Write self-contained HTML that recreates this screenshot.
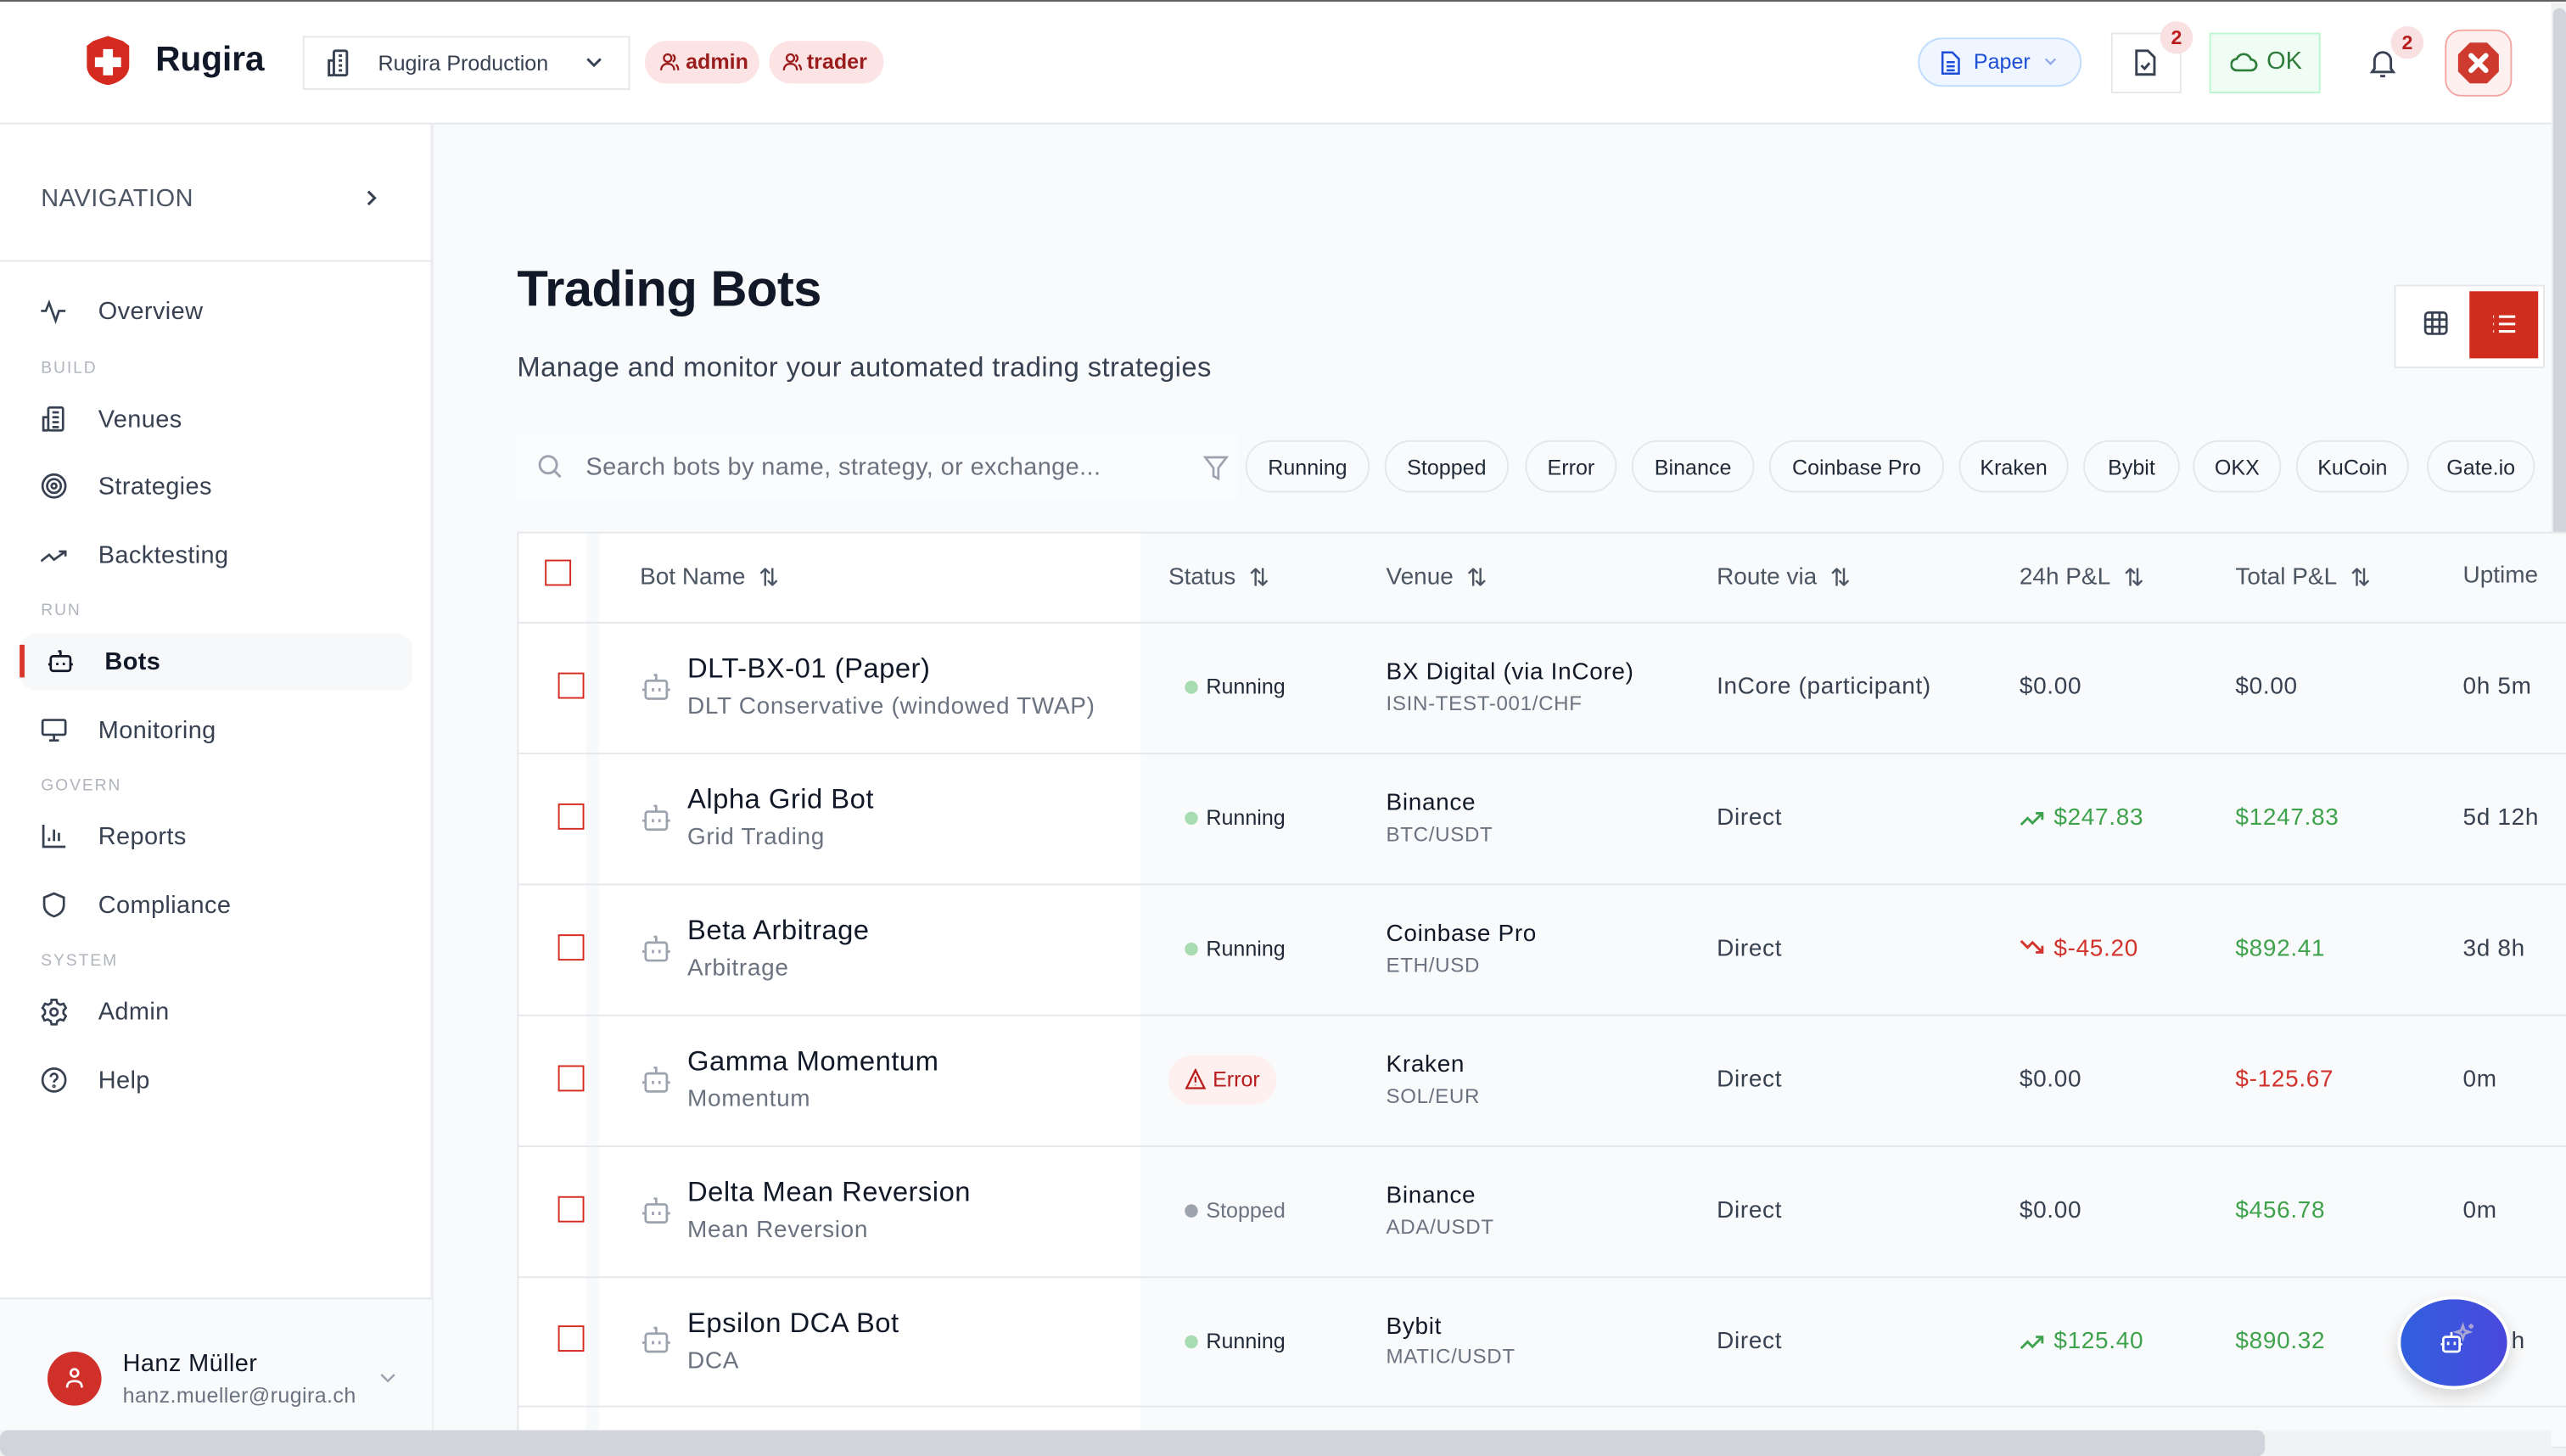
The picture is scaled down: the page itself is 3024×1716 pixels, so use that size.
<!DOCTYPE html>
<html><head><meta charset="utf-8"><style>
*{box-sizing:border-box;margin:0;padding:0}
html,body{width:3024px;height:1716px;overflow:hidden;background:#f9fafb}
#w{position:absolute;left:0;top:0;width:1568px;height:889.5px;transform:scale(1.928571);transform-origin:0 0;font-family:"Liberation Sans",sans-serif;color:#111827;background:#f9fafb;overflow:hidden}
.a{position:absolute}
svg{display:block}
.hdr{left:0;top:0;width:1568px;height:76px;background:#fff;border-top:1px solid #5f5f5f;border-bottom:1px solid #e5e7eb}
.side{left:0;top:76px;width:265px;height:814px;background:#fff;border-right:2px solid #eceef1}
.nav{left:25px;font-size:15px;color:#374151;font-weight:500;display:flex;align-items:center;letter-spacing:.2px}
.nav svg{margin-right:19px}
.sec{left:25px;font-size:10px;color:#b0b5bd;letter-spacing:1px}
.chip{top:269px;height:32px;border:1px solid #e5e7eb;border-radius:16px;font-size:13px;font-weight:500;color:#1f2937;display:flex;align-items:center;justify-content:center}
.th{top:344px;font-size:14.5px;color:#4b5563;display:flex;align-items:center}
.cb{width:16px;height:16px;border:1.5px solid #d42a1f}
.row{left:316px;width:1260px;height:80px;border-top:1px solid #e5e7eb}
.nm{font-size:17px;color:#111827;font-weight:500;letter-spacing:.25px}
.sub{font-size:14.5px;color:#6b7280;letter-spacing:.35px}
.c{font-size:14.5px;color:#374151;letter-spacing:.35px}
.g{color:#3fa34d}.r{color:#d0342c}
.st{font-size:13px;color:#1f2937;display:flex;align-items:center}
.dot{width:8px;height:8px;border-radius:50%;background:#a8dcb0;margin-right:5px}
</style></head><body><div id="w">
<div class="a hdr"></div>
<svg class="a" style="left:53px;top:22px" width="26" height="30" viewBox="0 0 26 30"><path d="M4 3 L13 0 L22 3 L26 6 V18 C26 25 19 29 13 30 C7 29 0 25 0 18 V6 Z" fill="#d42a1f"/><path d="M10 8h6v5h5v6h-5v5h-6v-5H5v-6h5z" fill="#fff"/></svg>
<div class="a" style="left:95px;top:25px;font-size:21px;font-weight:600;color:#111827">Rugira</div>
<div class="a" style="left:185px;top:22px;width:200px;height:33px;border:1.5px solid #e5e7eb;background:#fff"></div>
<svg class="a" style="left:199px;top:30px" width="16" height="17" viewBox="0 0 16 17" fill="none" stroke="#374151" stroke-width="1.5"><rect x="5" y="1" width="8" height="15" rx="1"/><path d="M5 7H2v9h3M8 4h2M8 7h2M8 10h2M8 13h2"/></svg>
<div class="a" style="left:231px;top:31px;font-size:13px;color:#374151">Rugira Production</div>
<svg class="a" style="left:357px;top:33px" width="12" height="10" viewBox="0 0 12 10"><path d="M2 3l4 4 4-4" fill="none" stroke="#374151" stroke-width="1.5"/></svg>
<div class="a" style="left:394px;top:25px;width:70px;height:26px;border-radius:13px;background:#fbe4e3;color:#9b1c1c;font-size:13px;font-weight:600;padding-left:25px;line-height:26px">admin</div>
<div class="a" style="left:470px;top:25px;width:70px;height:26px;border-radius:13px;background:#fbe4e3;color:#9b1c1c;font-size:13px;font-weight:600;padding-left:23px;line-height:26px">trader</div>
<svg class="a" style="left:403px;top:32px" width="12" height="12" viewBox="0 0 12 12" fill="none" stroke="#9b1c1c" stroke-width="1.2"><circle cx="5" cy="3.5" r="2.3"/><path d="M1 11c0-2.5 1.5-4 4-4s4 1.5 4 4M8 1.5a2.3 2.3 0 010 4.2M10 7.5c1 .7 1.5 2 1.5 3.5"/></svg>
<svg class="a" style="left:478px;top:32px" width="12" height="12" viewBox="0 0 12 12" fill="none" stroke="#9b1c1c" stroke-width="1.2"><circle cx="5" cy="3.5" r="2.3"/><path d="M1 11c0-2.5 1.5-4 4-4s4 1.5 4 4M8 1.5a2.3 2.3 0 010 4.2M10 7.5c1 .7 1.5 2 1.5 3.5"/></svg>
<div class="a" style="left:1172px;top:23px;width:100px;height:30px;border-radius:15px;background:#eff6ff;border:1.5px solid #bfdbfe;color:#1d4ed8;font-size:13px;font-weight:500;line-height:27px;padding-left:33px">Paper</div>
<svg class="a" style="left:1186px;top:31px" width="12" height="15" viewBox="0 0 12 15" fill="none" stroke="#1d4ed8" stroke-width="1.3"><path d="M1 1h6l4 4v9H1z"/><path d="M3.5 7h5M3.5 9.5h5M3.5 12h5"/></svg>
<svg class="a" style="left:1248px;top:34px" width="10" height="8" viewBox="0 0 10 8"><path d="M2 2l3 3 3-3" fill="none" stroke="#93a8e8" stroke-width="1.2"/></svg>
<div class="a" style="left:1290px;top:20px;width:43px;height:37px;border:1.5px solid #e5e7eb;background:#fff"></div>
<svg class="a" style="left:1304px;top:30px" width="14" height="17" viewBox="0 0 14 17" fill="none" stroke="#374151" stroke-width="1.5"><path d="M1.5 1h7l4 4v10.5h-11z"/><path d="M4.5 10l2 2 3-3.5"/></svg>
<div class="a" style="left:1320px;top:13px;width:20px;height:20px;border-radius:50%;background:#f9e1e1;color:#b91c1c;font-size:12px;font-weight:700;text-align:center;line-height:20px">2</div>
<div class="a" style="left:1350px;top:20px;width:68px;height:37px;border:1.5px solid #bbf7d0;background:#f0fdf4;color:#2f7d3b;font-size:15px;line-height:34px;padding-left:34px">OK</div>
<svg class="a" style="left:1363px;top:31px" width="17" height="14" viewBox="0 0 17 14"><path d="M4 12h8.5a3.3 3.3 0 000-6.6A4.6 4.6 0 003.8 5 3.5 3.5 0 004 12z" fill="none" stroke="#2f7d3b" stroke-width="1.4"/></svg>
<svg class="a" style="left:1448px;top:29px" width="16" height="19" viewBox="0 0 16 19" fill="none" stroke="#374151" stroke-width="1.5"><path d="M3 13V8a5 5 0 0110 0v5l1.5 2h-13z"/><path d="M6.5 17.5h3"/></svg>
<div class="a" style="left:1461px;top:16px;width:20px;height:20px;border-radius:50%;background:#f9e1e1;color:#b91c1c;font-size:12px;font-weight:700;text-align:center;line-height:20px">2</div>
<div class="a" style="left:1494px;top:18px;width:41px;height:41px;border-radius:10px;border:1.5px solid #f2a7a3;background:#fdf0ef"></div>
<svg class="a" style="left:1502px;top:26px" width="25" height="25" viewBox="0 0 25 25"><path d="M7.3 0h10.4L25 7.3v10.4L17.7 25H7.3L0 17.7V7.3z" fill="#cf3a2f"/><path d="M8 8l9 9M17 8l-9 9" stroke="#fff" stroke-width="3.2" stroke-linecap="round"/></svg>
<div class="a" style="left:1559px;top:1px;width:9px;height:889px;background:#f1f2f4"></div>
<div class="a" style="left:1560px;top:5px;width:8px;height:560px;border-radius:4px;background:#d1d5db"></div>
<div class="a side"></div>
<div class="a" style="left:25px;top:113px;font-size:15px;color:#4b5563;letter-spacing:.3px">NAVIGATION</div>
<svg class="a" style="left:221px;top:114px" width="12" height="14" viewBox="0 0 12 14"><path d="M4 3l4 4-4 4" fill="none" stroke="#374151" stroke-width="1.6"/></svg>
<div class="a" style="left:0;top:159px;width:264px;height:1px;background:#e5e7eb"></div>
<div class="a nav" style="top:181px"><svg width="16" height="18" viewBox="0 0 16 18" fill="none" stroke="#374151" stroke-width="1.4"><path d="M0 9h3l2-5 4 11 2-6h4"/></svg>Overview</div>
<div class="a sec" style="top:220px">BUILD</div>
<div class="a nav" style="top:247px"><svg width="16" height="18" viewBox="0 0 16 18" fill="none" stroke="#374151" stroke-width="1.4"><rect x="4.5" y="2" width="9" height="14" rx="1"/><path d="M4.5 8H1.5v8h3M7 5h4M7 8h4M7 11h4M7 14h4"/></svg>Venues</div>
<div class="a nav" style="top:288px"><svg width="16" height="18" viewBox="0 0 16 18" fill="none" stroke="#374151" stroke-width="1.4"><circle cx="8" cy="9" r="7"/><circle cx="8" cy="9" r="4.2"/><circle cx="8" cy="9" r="1.5"/></svg>Strategies</div>
<div class="a nav" style="top:330px"><svg width="16" height="18" viewBox="0 0 16 18" fill="none" stroke="#374151" stroke-width="1.4"><path d="M0 13l5-4 3 3 7-5M11 7h4v3"/></svg>Backtesting</div>
<div class="a sec" style="top:368px">RUN</div>
<div class="a" style="left:12px;top:387px;width:240px;height:35px;border-radius:10px;background:#f7f8fa"></div>
<div class="a" style="left:12px;top:394px;width:2.5px;height:20px;background:#d9372b"></div>
<div class="a nav" style="left:29px;top:395px;color:#111827;font-weight:600"><svg width="16" height="18" viewBox="0 0 16 18" fill="none" stroke="#111827" stroke-width="1.4"><rect x="2" y="6" width="12" height="9" rx="1.5"/><path d="M8 6V3M6.5 3h2M0.5 11h1.5M14 11h1.5M6 10v1.5M10 10v1.5"/></svg>Bots</div>
<div class="a nav" style="top:437px"><svg width="16" height="18" viewBox="0 0 16 18" fill="none" stroke="#374151" stroke-width="1.4"><rect x="1" y="3" width="14" height="9" rx="1"/><path d="M8 12v3M5 15.5h6"/></svg>Monitoring</div>
<div class="a sec" style="top:475px">GOVERN</div>
<div class="a nav" style="top:502px"><svg width="16" height="18" viewBox="0 0 16 18" fill="none" stroke="#374151" stroke-width="1.4"><path d="M1.5 2v13.5H15M5 12v-2M8 12V5M11 12V7"/></svg>Reports</div>
<div class="a nav" style="top:544px"><svg width="16" height="18" viewBox="0 0 16 18" fill="none" stroke="#374151" stroke-width="1.4"><path d="M8 2l6 2.5V9c0 4-3 6-6 7-3-1-6-3-6-7V4.5z"/></svg>Compliance</div>
<div class="a sec" style="top:582px">SYSTEM</div>
<div class="a nav" style="top:609px"><svg width="16" height="18" viewBox="0 0 16 18" fill="none" stroke="#374151" stroke-width="1.4"><path d="M6.5 2h3l.5 2 1.8 1 2-.6 1.5 2.6-1.5 1.5v2l1.5 1.5-1.5 2.6-2-.6-1.8 1-.5 2h-3l-.5-2-1.8-1-2 .6L1 12l1.5-1.5v-2L1 7l1.5-2.6 2 .6 1.8-1z"/><circle cx="8" cy="9.5" r="2.2"/></svg>Admin</div>
<div class="a nav" style="top:651px"><svg width="16" height="18" viewBox="0 0 16 18" fill="none" stroke="#374151" stroke-width="1.4"><circle cx="8" cy="9" r="7"/><path d="M6 7.2a2 2 0 113 1.7c-.7.4-1 .8-1 1.6"/><circle cx="8" cy="12.8" r=".4"/></svg>Help</div>
<div class="a" style="left:0;top:793px;width:264px;height:1.5px;background:#e5e7eb"></div>
<div class="a" style="left:0;top:794px;width:264px;height:80px;background:#f9fafb"></div>
<div class="a" style="left:29px;top:826px;width:33px;height:33px;border-radius:50%;background:#d0302a"></div>
<svg class="a" style="left:38px;top:834px" width="15" height="17" viewBox="0 0 15 17" fill="none" stroke="#fff" stroke-width="1.4"><circle cx="7.5" cy="5" r="2.3"/><path d="M3 14c0-2.5 1-4 4.5-4s4.5 1.5 4.5 4"/></svg>
<div class="a" style="left:75px;top:825px;font-size:15px;color:#111827;font-weight:500;letter-spacing:.2px">Hanz Müller</div>
<div class="a" style="left:75px;top:845px;font-size:13px;color:#6b7280;letter-spacing:.2px">hanz.mueller@rugira.ch</div>
<svg class="a" style="left:231px;top:837px" width="12" height="10" viewBox="0 0 12 10"><path d="M2 3l4 4 4-4" fill="none" stroke="#9ca3af" stroke-width="1.3"/></svg>
<div class="a" style="left:316px;top:159px;font-size:31px;font-weight:700;color:#111827;letter-spacing:-.3px">Trading Bots</div>
<div class="a" style="left:316px;top:215px;font-size:17px;color:#374151;letter-spacing:.2px">Manage and monitor your automated trading strategies</div>
<div class="a" style="left:1463px;top:174px;width:92px;height:51px;border:1.5px solid #e5e7eb;background:#fff"></div>
<svg class="a" style="left:1481px;top:190px" width="15" height="15" viewBox="0 0 15 15" fill="none" stroke="#374151" stroke-width="1.4"><rect x="1" y="1" width="13" height="13" rx="2"/><path d="M5.3 1v13M9.7 1v13M1 5.3h13M1 9.7h13"/></svg>
<div class="a" style="left:1509px;top:178px;width:42px;height:41px;background:#d02d1f"></div>
<svg class="a" style="left:1522px;top:191px" width="16" height="14" viewBox="0 0 16 14" stroke="#fff" stroke-width="1.6"><path d="M5 2.5h10M5 7h10M5 11.5h10M1.5 2.5h.5M1.5 7h.5M1.5 11.5h.5"/></svg>
<div class="a" style="left:316px;top:265px;width:440px;height:40px;background:#fbfcfd"></div>
<svg class="a" style="left:328px;top:277px" width="16" height="16" viewBox="0 0 16 16" fill="none" stroke="#9ca3af" stroke-width="1.5"><circle cx="7" cy="7" r="5.2"/><path d="M11 11l3.5 3.5"/></svg>
<div class="a" style="left:358px;top:277px;font-size:15px;color:#6b7280;letter-spacing:.2px">Search bots by name, strategy, or exchange...</div>
<svg class="a" style="left:735px;top:278px" width="16" height="16" viewBox="0 0 16 16" fill="none" stroke="#9ca3af" stroke-width="1.4"><path d="M1.5 1.5h13L9.5 8v6.5l-3-1.5V8z"/></svg>
<div class="a chip" style="left:761px;width:76px">Running</div>
<div class="a chip" style="left:846px;width:76px">Stopped</div>
<div class="a chip" style="left:932px;width:56px">Error</div>
<div class="a chip" style="left:997px;width:75px">Binance</div>
<div class="a chip" style="left:1081px;width:107px">Coinbase Pro</div>
<div class="a chip" style="left:1197px;width:67px">Kraken</div>
<div class="a chip" style="left:1273px;width:59px">Bybit</div>
<div class="a chip" style="left:1340px;width:54px">OKX</div>
<div class="a chip" style="left:1403px;width:69px">KuCoin</div>
<div class="a chip" style="left:1483px;width:66px">Gate.io</div>
<div class="a" style="left:316px;top:325px;width:1260px;height:560px;border:1px solid #e5e7eb;background:#f9fafb"></div>
<div class="a" style="left:317px;top:326px;width:380px;height:548px;background:#fff"></div>
<div class="a" style="left:358px;top:326px;width:8px;height:548px;background:#f8f9fa"></div>
<div class="a row" style="top:380px"></div><div class="a row" style="top:460px"></div><div class="a row" style="top:540px"></div><div class="a row" style="top:620px"></div><div class="a row" style="top:700px"></div><div class="a row" style="top:780px"></div><div class="a row" style="top:859px;height:15px"></div>
<div class="a cb" style="left:333px;top:342px"></div>
<div class="a th" style="left:391px">Bot Name <span style="margin-left:8px;font-size:15px">⇅</span></div>
<div class="a th" style="left:714px">Status <span style="margin-left:8px;font-size:15px">⇅</span></div>
<div class="a th" style="left:847px">Venue <span style="margin-left:8px;font-size:15px">⇅</span></div>
<div class="a th" style="left:1049px">Route via <span style="margin-left:8px;font-size:15px">⇅</span></div>
<div class="a th" style="left:1234px">24h P&amp;L <span style="margin-left:8px;font-size:15px">⇅</span></div>
<div class="a th" style="left:1366px">Total P&amp;L <span style="margin-left:8px;font-size:15px">⇅</span></div>
<div class="a th" style="left:1505px">Uptime</div>

<div class="a cb" style="left:341px;top:411px"></div>
<svg class="a" style="left:392px;top:410px" width="18" height="19" viewBox="0 0 18 19" fill="none" stroke="#9ca3af" stroke-width="1.4"><rect x="2.5" y="6" width="13" height="11" rx="1.5"/><path d="M9 6V2.5M7.5 2.5h2M0.5 11.5h2M15.5 11.5h2M7 10.5v2M11 10.5v2"/></svg>
<div class="a nm" style="left:420px;top:399px">DLT-BX-01 (Paper)</div>
<div class="a sub" style="left:420px;top:424px">DLT Conservative (windowed TWAP)</div>
<div class="a st" style="left:724px;top:412px"><span class="dot"></span>Running</div>
<div class="a c" style="left:847px;top:403px;color:#111827">BX Digital (via InCore)</div>
<div class="a sub" style="left:847px;top:423px;font-size:12.5px">ISIN-TEST-001/CHF</div>
<div class="a c" style="left:1049px;top:412px">InCore (participant)</div>
<div class="a c" style="left:1234px;top:412px">$0.00</div>
<div class="a c" style="left:1366px;top:412px">$0.00</div>
<div class="a c" style="left:1505px;top:412px">0h 5m</div>

<div class="a cb" style="left:341px;top:491px"></div>
<svg class="a" style="left:392px;top:490px" width="18" height="19" viewBox="0 0 18 19" fill="none" stroke="#9ca3af" stroke-width="1.4"><rect x="2.5" y="6" width="13" height="11" rx="1.5"/><path d="M9 6V2.5M7.5 2.5h2M0.5 11.5h2M15.5 11.5h2M7 10.5v2M11 10.5v2"/></svg>
<div class="a nm" style="left:420px;top:479px">Alpha Grid Bot</div>
<div class="a sub" style="left:420px;top:504px">Grid Trading</div>
<div class="a st" style="left:724px;top:492px"><span class="dot"></span>Running</div>
<div class="a c" style="left:847px;top:483px;color:#111827">Binance</div>
<div class="a sub" style="left:847px;top:503px;font-size:12.5px">BTC/USDT</div>
<div class="a c" style="left:1049px;top:492px">Direct</div>
<svg class="a" style="left:1234px;top:494px" width="16" height="12" viewBox="0 0 16 12" fill="none" stroke="#3fa34d" stroke-width="1.5"><path d="M1 10l4-4 3 3 6-6M10 3h4v4"/></svg>
<div class="a c g" style="left:1255px;top:492px">$247.83</div>
<div class="a c g" style="left:1366px;top:492px">$1247.83</div>
<div class="a c" style="left:1505px;top:492px">5d 12h</div>

<div class="a cb" style="left:341px;top:571px"></div>
<svg class="a" style="left:392px;top:570px" width="18" height="19" viewBox="0 0 18 19" fill="none" stroke="#9ca3af" stroke-width="1.4"><rect x="2.5" y="6" width="13" height="11" rx="1.5"/><path d="M9 6V2.5M7.5 2.5h2M0.5 11.5h2M15.5 11.5h2M7 10.5v2M11 10.5v2"/></svg>
<div class="a nm" style="left:420px;top:559px">Beta Arbitrage</div>
<div class="a sub" style="left:420px;top:584px">Arbitrage</div>
<div class="a st" style="left:724px;top:572px"><span class="dot"></span>Running</div>
<div class="a c" style="left:847px;top:563px;color:#111827">Coinbase Pro</div>
<div class="a sub" style="left:847px;top:583px;font-size:12.5px">ETH/USD</div>
<div class="a c" style="left:1049px;top:572px">Direct</div>
<svg class="a" style="left:1234px;top:573px" width="16" height="12" viewBox="0 0 16 12" fill="none" stroke="#d0342c" stroke-width="1.5"><path d="M1 2l4 4 3-3 6 6M10 9h4V5"/></svg>
<div class="a c r" style="left:1255px;top:572px">$-45.20</div>
<div class="a c g" style="left:1366px;top:572px">$892.41</div>
<div class="a c" style="left:1505px;top:572px">3d 8h</div>

<div class="a cb" style="left:341px;top:651px"></div>
<svg class="a" style="left:392px;top:650px" width="18" height="19" viewBox="0 0 18 19" fill="none" stroke="#9ca3af" stroke-width="1.4"><rect x="2.5" y="6" width="13" height="11" rx="1.5"/><path d="M9 6V2.5M7.5 2.5h2M0.5 11.5h2M15.5 11.5h2M7 10.5v2M11 10.5v2"/></svg>
<div class="a nm" style="left:420px;top:639px">Gamma Momentum</div>
<div class="a sub" style="left:420px;top:664px">Momentum</div>
<div class="a" style="left:714px;top:645px;width:66px;height:30px;border-radius:15px;background:#fdf0ef"></div>
<svg class="a" style="left:724px;top:653px" width="13" height="13" viewBox="0 0 13 13" fill="none" stroke="#b91c1c" stroke-width="1.2"><path d="M6.5 1L12 12H1z"/><path d="M6.5 5v3.5M6.5 10v.3"/></svg>
<div class="a st" style="left:741px;top:652px;color:#b91c1c">Error</div>
<div class="a c" style="left:847px;top:643px;color:#111827">Kraken</div>
<div class="a sub" style="left:847px;top:663px;font-size:12.5px">SOL/EUR</div>
<div class="a c" style="left:1049px;top:652px">Direct</div>
<div class="a c" style="left:1234px;top:652px">$0.00</div>
<div class="a c r" style="left:1366px;top:652px">$-125.67</div>
<div class="a c" style="left:1505px;top:652px">0m</div>

<div class="a cb" style="left:341px;top:731px"></div>
<svg class="a" style="left:392px;top:730px" width="18" height="19" viewBox="0 0 18 19" fill="none" stroke="#9ca3af" stroke-width="1.4"><rect x="2.5" y="6" width="13" height="11" rx="1.5"/><path d="M9 6V2.5M7.5 2.5h2M0.5 11.5h2M15.5 11.5h2M7 10.5v2M11 10.5v2"/></svg>
<div class="a nm" style="left:420px;top:719px">Delta Mean Reversion</div>
<div class="a sub" style="left:420px;top:744px">Mean Reversion</div>
<div class="a st" style="left:724px;top:732px;color:#6b7280"><span class="dot" style="background:#9ca3af"></span>Stopped</div>
<div class="a c" style="left:847px;top:723px;color:#111827">Binance</div>
<div class="a sub" style="left:847px;top:743px;font-size:12.5px">ADA/USDT</div>
<div class="a c" style="left:1049px;top:732px">Direct</div>
<div class="a c" style="left:1234px;top:732px">$0.00</div>
<div class="a c g" style="left:1366px;top:732px">$456.78</div>
<div class="a c" style="left:1505px;top:732px">0m</div>

<div class="a cb" style="left:341px;top:810px"></div>
<svg class="a" style="left:392px;top:809px" width="18" height="19" viewBox="0 0 18 19" fill="none" stroke="#9ca3af" stroke-width="1.4"><rect x="2.5" y="6" width="13" height="11" rx="1.5"/><path d="M9 6V2.5M7.5 2.5h2M0.5 11.5h2M15.5 11.5h2M7 10.5v2M11 10.5v2"/></svg>
<div class="a nm" style="left:420px;top:799px">Epsilon DCA Bot</div>
<div class="a sub" style="left:420px;top:824px">DCA</div>
<div class="a st" style="left:724px;top:812px"><span class="dot"></span>Running</div>
<div class="a c" style="left:847px;top:803px;color:#111827">Bybit</div>
<div class="a sub" style="left:847px;top:822px;font-size:12.5px">MATIC/USDT</div>
<div class="a c" style="left:1049px;top:812px">Direct</div>
<svg class="a" style="left:1234px;top:814px" width="16" height="12" viewBox="0 0 16 12" fill="none" stroke="#3fa34d" stroke-width="1.5"><path d="M1 10l4-4 3 3 6-6M10 3h4v4"/></svg>
<div class="a c g" style="left:1255px;top:812px">$125.40</div>
<div class="a c g" style="left:1366px;top:812px">$890.32</div>
<div class="a c" style="left:1505px;top:812px">5d 6h</div>
<div class="a" style="left:1465px;top:792px;width:69px;height:57px;border-radius:50%;border:2.5px solid #fff;background:linear-gradient(90deg,#3160de,#4a48dc);box-shadow:0 4px 10px rgba(0,0,0,.15)"></div>
<svg class="a" style="left:1490px;top:808px" width="24" height="22" viewBox="0 0 24 22" fill="none" stroke-width="1.4"><rect x="3" y="9" width="10" height="9" rx="1.5" stroke="#fff"/><path d="M8 9V6M1.5 13.5h1.5M13 13.5h1.5M6 12v2M10 12v2" stroke="#fff"/><path d="M15 2l1 3 3 1-3 1-1 3-1-3-3-1 3-1z" stroke="#a9a6d6"/><path d="M20 1v3M18.5 2.5h3" stroke="#a9a6d6"/></svg>
<div class="a" style="left:0;top:874px;width:1559px;height:15.5px;background:#f1f2f4"></div>
<div class="a" style="left:0;top:874px;width:1384px;height:15.5px;border-radius:5px;background:#d1d5db"></div>
</div></body></html>
